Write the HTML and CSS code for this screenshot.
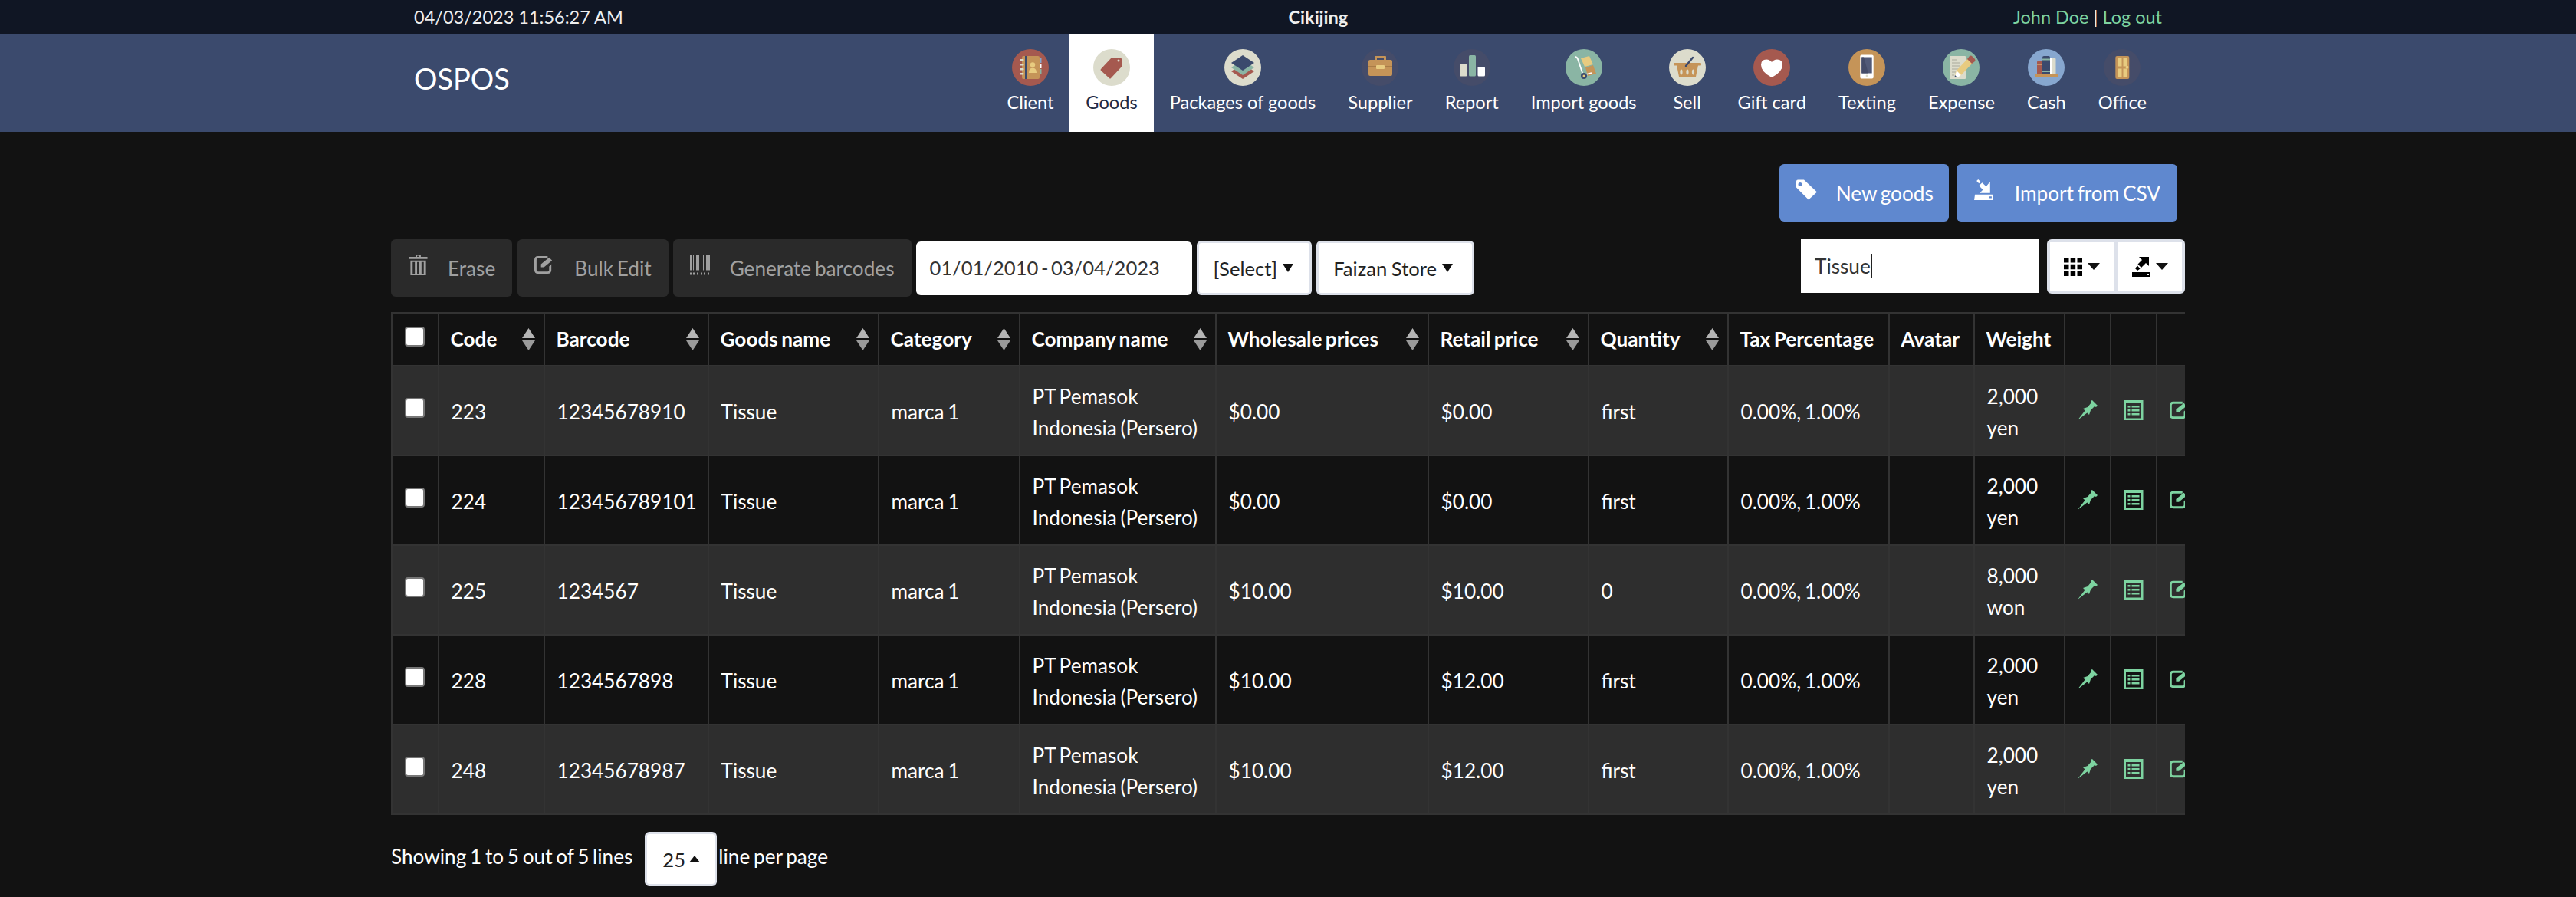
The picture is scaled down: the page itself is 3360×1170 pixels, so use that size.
FILE: index.html
```html
<!DOCTYPE html>
<html lang="en">
<head>
    <meta charset="UTF-8">
    <meta name="viewport" content="width=device-width, initial-scale=1.0">
    <title>OSPOS - Goods</title>
    <link rel="stylesheet" href="styles.css">
</head>
<body>

<svg class="icon-defs" width="0" height="0">
    <symbol id="sort" viewBox="0 0 17 29">
        <polygon points="8.5,0 17,13 0,13" fill="#b5b5b5"/>
        <polygon points="0,16 17,16 8.5,29" fill="#9a9a9a"/>
    </symbol>
    <symbol id="pin" viewBox="0 0 26 26">
        <path d="M0 26 L10 13 L13 16 Z M7 11 L13 9 L18 3 L17 1 L19 0 L26 7 L24 9 L22 8 L17 13 L15 19 Z"/>
    </symbol>
    <symbol id="sheet" viewBox="0 0 25 26">
        <path fill-rule="evenodd" d="M0 0H25V26H0Z M2.5 4V23.5H22.5V4Z M5 7H8V9.5H5Z M10 7H20V9.5H10Z M5 12H8V14.5H5Z M10 12H20V14.5H10Z M5 17H8V19.5H5Z M10 17H20V19.5H10Z"/>
    </symbol>
    <symbol id="edit" viewBox="0 0 28 24">
        <path d="M5 0H18V3H5Q3 3 3 5V19Q3 21 5 21H18Q20 21 20 19V14L23 11V19Q23 24 18 24H5Q0 24 0 19V5Q0 0 5 0Z"/>
        <path d="M9 15V11L20 2L24 6L13 15Z"/>
    </symbol>
    <symbol id="tag" viewBox="0 0 27 26">
        <path fill-rule="evenodd" d="M0 2Q0 0 2 0H10L27 16L16 26L0 10Z M5 3.5A2.5 2.5 0 1 0 5 8.5A2.5 2.5 0 1 0 5 3.5Z"/>
    </symbol>
    <symbol id="export" viewBox="0 0 24 26">
        <path fill-rule="evenodd" d="M1 19H23L24 26H0Z M19 21.5V23.5H22V21.5Z M20 3V17H7L11 13L6 8L10 4L15 9Z M3 2L5 0L8 3L6 5Z"/>
    </symbol>
    <symbol id="export-up" viewBox="0 0 24 26">
        <path fill-rule="evenodd" d="M0 20H24V26H0Z M19 22.5V24H22V22.5Z M9 0H22V12L18 8L12 14L7.5 9.5L13 4Z M4 15L7 11.5L10.5 15.5L7 18Z"/>
    </symbol>
</svg>

<div class="topbar">
    <span>04/03/2023 11:56:27 AM</span>
    <strong class="store-name">Cikijing</strong>
    <span class="user-links"><a href="#">John Doe</a> | <a href="#">Log out</a></span>
</div>

<nav class="navbar">
    <a class="brand" href="#">OSPOS</a>
    <ul class="menu">
        <li class="menu-item">
            <svg class="menu-icon" viewBox="0 0 48 48">
                <circle cx="24" cy="24" r="24" fill="#a5594f"/>
                <rect x="36" y="12" width="2.5" height="6" fill="#87a7cf"/>
                <rect x="36" y="19" width="2.5" height="6" fill="#fff"/>
                <rect x="36" y="26" width="2.5" height="6" fill="#8ab5a4"/>
                <rect x="13" y="9" width="23" height="30" rx="2" fill="#c59458"/>
                <rect x="17" y="9" width="2" height="30" fill="#3b4a6d"/>
                <rect x="10" y="13" width="5.5" height="2.5" rx="1" fill="#dcdccc"/>
                <rect x="10" y="19" width="5.5" height="2.5" rx="1" fill="#dcdccc"/>
                <rect x="10" y="25" width="5.5" height="2.5" rx="1" fill="#dcdccc"/>
                <rect x="10" y="31" width="5.5" height="2.5" rx="1" fill="#dcdccc"/>
                <circle cx="27" cy="20.5" r="3.2" fill="#e8cb80"/>
                <path d="M22 31Q22 24.5 27 24.5Q32 24.5 32 31Z" fill="#e8cb80"/>
            </svg>
            Client
        </li>
        <li class="menu-item active">
            <svg class="menu-icon" viewBox="0 0 48 48">
                <circle cx="24" cy="24" r="24" fill="#dcdccc"/>
                <path d="M24 11H35Q37 11 37 13V23L23 38Q22 39 21 38L10 28Q9 27 10 26Z" fill="#a5594f"/>
                <circle cx="33" cy="15" r="1.5" fill="#dcdccc"/>
            </svg>
            Goods
        </li>
        <li class="menu-item">
            <svg class="menu-icon" viewBox="0 0 48 48">
                <circle cx="24" cy="24" r="24" fill="#dcdccc"/>
                <path d="M24 19L39 29L24 39L9 29Z" fill="#a5594f"/>
                <path d="M24 14L39 24L24 34L9 24Z" fill="#8ab5a4"/>
                <path d="M24 8L39 18L24 28L9 18Z" fill="#3b4a6d"/>
            </svg>
            Packages of goods
        </li>
        <li class="menu-item">
            <svg class="menu-icon" viewBox="0 0 48 48">
                <circle cx="24" cy="24" r="24" fill="#454c69"/>
                <path d="M17 15V10Q17 9 18 9H31Q32 9 32 10V15H29V11.5H20V15Z" fill="#c59458"/>
                <rect x="9" y="14" width="31" height="21" rx="2" fill="#c59458"/>
                <rect x="9" y="22" width="31" height="1" fill="#a97c47"/>
                <rect x="19" y="21" width="11" height="5" rx="1" fill="#e8cb80"/>
            </svg>
            Supplier
        </li>
        <li class="menu-item">
            <svg class="menu-icon" viewBox="0 0 48 48">
                <circle cx="24" cy="24" r="24" fill="#454c69"/>
                <rect x="8" y="19" width="9.5" height="16.5" rx="1.5" fill="#dcdccc"/>
                <rect x="20" y="8" width="9" height="27.5" rx="1.5" fill="#8ab5a4"/>
                <rect x="31.5" y="23" width="9.5" height="12.5" rx="1.5" fill="#fff"/>
            </svg>
            Report
        </li>
        <li class="menu-item">
            <svg class="menu-icon" viewBox="0 0 48 48">
                <circle cx="24" cy="24" r="24" fill="#8ab5a4"/>
                <path d="M20 12L31 9L36 20L25 23Z" fill="#e8cb80"/>
                <path d="M26 24L36 21L40 32L29 35Z" fill="#c59458"/>
                <path d="M12 10Q15 10 16 13L23 34L34 31" fill="none" stroke="#fff" stroke-width="1.8"/>
                <circle cx="24" cy="35" r="4" fill="#3b4a6d"/>
                <circle cx="24" cy="35" r="1.5" fill="#e8cb80"/>
            </svg>
            Import goods
        </li>
        <li class="menu-item">
            <svg class="menu-icon" viewBox="0 0 48 48">
                <circle cx="24" cy="24" r="24" fill="#dcdccc"/>
                <path d="M10 21H38L35 36Q35 37 33 37H15Q13 37 13 36Z" fill="#c59458"/>
                <rect x="6" y="18" width="36" height="3.5" rx="1" fill="#c59458"/>
                <line x1="22" y1="22" x2="31" y2="11" stroke="#3b4a6d" stroke-width="2.5" stroke-linecap="round"/>
                <ellipse cx="16" cy="30" rx="1.6" ry="3.4" fill="#dcdccc"/>
                <ellipse cx="24" cy="30" rx="1.6" ry="3.4" fill="#dcdccc"/>
                <ellipse cx="31.5" cy="30" rx="1.6" ry="3.4" fill="#dcdccc"/>
            </svg>
            Sell
        </li>
        <li class="menu-item">
            <svg class="menu-icon" viewBox="0 0 48 48">
                <circle cx="24" cy="24" r="24" fill="#a5594f"/>
                <path d="M24 37Q10 30 10 20.5Q10 13.5 17 13.5Q21.5 13.5 24 17Q26.5 13.5 31 13.5Q38 13.5 38 20.5Q38 30 24 37Z" fill="#fff"/>
            </svg>
            Gift card
        </li>
        <li class="menu-item">
            <svg class="menu-icon" viewBox="0 0 48 48">
                <circle cx="24" cy="24" r="24" fill="#c59458"/>
                <rect x="15.3" y="7.5" width="17.4" height="31" rx="2" fill="#fff"/>
                <rect x="17.3" y="10.5" width="13.4" height="21" fill="#525a78"/>
                <path d="M17.3 10.5H20L26 31.5H17.3Z" fill="#454c69"/>
                <circle cx="24" cy="35" r="1.4" fill="#dcdccc"/>
            </svg>
            Texting
        </li>
        <li class="menu-item">
            <svg class="menu-icon" viewBox="0 0 48 48">
                <circle cx="24" cy="24" r="24" fill="#8ab5a4"/>
                <rect x="9" y="9" width="21" height="30" rx="1" fill="#dcdccc"/>
                <path d="M12 14H19M12 18H23M12 22H23M12 26H21M12 30H17M12 34H15" stroke="#a9a99b" stroke-width="1.2"/>
                <path d="M17 29L34 11L40 17L23 35L16 35Z" fill="#e8cb80"/>
                <path d="M32 13L35 9Q37 8 38 9L42 13Q43 15 42 16L38 19Z" fill="#a5594f"/>
                <path d="M18 28L24 34L19 37L16 36Z" fill="#fff"/>
                <path d="M16 34L18 36L15.5 37Z" fill="#3b4a6d"/>
            </svg>
            Expense
        </li>
        <li class="menu-item">
            <svg class="menu-icon" viewBox="0 0 48 48">
                <circle cx="24" cy="24" r="24" fill="#87a7cf"/>
                <path d="M12 17Q12 15 14 15H17Q19 15 19 17V33H12Z" fill="#a5594f"/>
                <rect x="12" y="19" width="7" height="1.5" fill="#e8cb80"/>
                <path d="M19 11Q19 9 21 9H27Q29 9 29 11V33H19Z" fill="#3b4a6d"/>
                <rect x="19" y="12.5" width="10" height="2" fill="#8ab5a4"/>
                <rect x="19" y="28" width="10" height="2" fill="#8ab5a4"/>
                <rect x="29" y="12" width="7.5" height="21" rx="1" fill="#dcdccc"/>
                <rect x="29" y="12" width="2" height="21" fill="#fff"/>
                <rect x="9" y="33" width="30" height="3.5" fill="#c59458"/>
            </svg>
            Cash
        </li>
        <li class="menu-item">
            <svg class="menu-icon" viewBox="0 0 48 48">
                <circle cx="24" cy="24" r="24" fill="#454c69"/>
                <rect x="15.3" y="9" width="18" height="30" rx="2" fill="#c59458"/>
                <rect x="18" y="12" width="5.5" height="10.5" fill="#e8cb80"/>
                <rect x="25.5" y="12" width="5.5" height="10.5" fill="#e8cb80"/>
                <rect x="18" y="25.5" width="5.5" height="10.5" fill="#e8cb80"/>
                <rect x="25.5" y="25.5" width="5.5" height="10.5" fill="#e8cb80"/>
                <circle cx="30.5" cy="23.7" r="2" fill="#e8cb80"/>
            </svg>
            Office
        </li>
    </ul>
</nav>

<main class="content">
    <div class="actions">
        <button class="btn btn-primary btn-new"><svg class="btn-icon"><use href="#tag"/></svg>New goods</button>
        <button class="btn btn-primary btn-csv"><svg class="btn-icon"><use href="#export"/></svg>Import from CSV</button>
    </div>

    <div class="toolbar">
        <button class="btn btn-muted btn-erase">
            <svg class="btn-icon" viewBox="0 0 27 28">
                <path fill-rule="evenodd" d="M10 0H17V3H26V6H1V3H10Z M12 1.5V3H15V1.5Z M3 8H24V28H3Z M6 10V26H9V10Z M12 10V26H15V10Z M18 10V26H21V10Z"/>
            </svg>Erase
        </button>
        <button class="btn btn-muted">
            <svg class="btn-icon"><use href="#edit"/></svg>Bulk Edit
        </button>
        <button class="btn btn-muted">
            <svg class="btn-icon" viewBox="0 0 27 26">
                <path d="M0 0H2V20H0Z M4 0H5V20H4Z M8 0H12V20H8Z M14 0H15V20H14Z M17 0H18V20H17Z M21 0H26V20H21Z M0 23H2V26H0Z M4 23H6V26H4Z M9 23H11V26H9Z M14 23H16V26H14Z M18 23H20V26H18Z M23 23H25V26H23Z"/>
            </svg>Generate barcodes
        </button>
        <div class="date-range">01/01/2010 - 03/04/2023</div>
        <button class="btn btn-select">[Select]<span class="caret"></span></button>
        <button class="btn btn-select btn-store">Faizan Store<span class="caret"></span></button>

        <div class="search-box">Tissue<span class="text-cursor"></span></div>
        <div class="btn-group">
            <button class="group-btn">
                <svg class="grid-icon" viewBox="0 0 24 24">
                    <path d="M0 0H6.5V6.5H0Z M8.7 0H15.2V6.5H8.7Z M17.5 0H24V6.5H17.5Z M0 8.7H6.5V15.2H0Z M8.7 8.7H15.2V15.2H8.7Z M17.5 8.7H24V15.2H17.5Z M0 17.5H6.5V24H0Z M8.7 17.5H15.2V24H8.7Z M17.5 17.5H24V24H17.5Z"/>
                </svg><span class="caret caret-wide"></span>
            </button>
            <button class="group-btn">
                <svg class="export-icon"><use href="#export-up"/></svg><span class="caret caret-wide"></span>
            </button>
        </div>
    </div>

    <div class="table-wrap">
        <table class="goods-table">
            <colgroup>
                <col class="c-check"><col class="c-code"><col class="c-barcode"><col class="c-name"><col class="c-category">
                <col class="c-company"><col class="c-wholesale"><col class="c-retail"><col class="c-qty"><col class="c-tax">
                <col class="c-avatar"><col class="c-weight"><col class="c-act"><col class="c-act"><col class="c-act">
            </colgroup>
            <thead>
                <tr>
                    <th><input class="check" type="checkbox"></th>
                    <th><div class="th-sort">Code<svg class="sort-icon"><use href="#sort"/></svg></div></th>
                    <th><div class="th-sort">Barcode<svg class="sort-icon"><use href="#sort"/></svg></div></th>
                    <th><div class="th-sort">Goods name<svg class="sort-icon"><use href="#sort"/></svg></div></th>
                    <th><div class="th-sort">Category<svg class="sort-icon"><use href="#sort"/></svg></div></th>
                    <th><div class="th-sort">Company name<svg class="sort-icon"><use href="#sort"/></svg></div></th>
                    <th><div class="th-sort">Wholesale prices<svg class="sort-icon"><use href="#sort"/></svg></div></th>
                    <th><div class="th-sort">Retail price<svg class="sort-icon"><use href="#sort"/></svg></div></th>
                    <th><div class="th-sort">Quantity<svg class="sort-icon"><use href="#sort"/></svg></div></th>
                    <th>Tax Percentage</th>
                    <th>Avatar</th>
                    <th>Weight</th>
                    <th></th>
                    <th></th>
                    <th></th>
                </tr>
            </thead>
            <tbody>
                <tr>
                    <td><input class="check" type="checkbox"></td>
                    <td>223</td>
                    <td>12345678910</td>
                    <td>Tissue</td>
                    <td>marca 1</td>
                    <td>PT Pemasok Indonesia (Persero)</td>
                    <td>$0.00</td>
                    <td>$0.00</td>
                    <td>first</td>
                    <td>0.00%, 1.00%</td>
                    <td></td>
                    <td>2,000 yen</td>
                    <td><svg class="act-icon"><use href="#pin"/></svg></td>
                    <td><svg class="act-icon"><use href="#sheet"/></svg></td>
                    <td><svg class="act-icon"><use href="#edit"/></svg></td>
                </tr>
                <tr>
                    <td><input class="check" type="checkbox"></td>
                    <td>224</td>
                    <td>123456789101</td>
                    <td>Tissue</td>
                    <td>marca 1</td>
                    <td>PT Pemasok Indonesia (Persero)</td>
                    <td>$0.00</td>
                    <td>$0.00</td>
                    <td>first</td>
                    <td>0.00%, 1.00%</td>
                    <td></td>
                    <td>2,000 yen</td>
                    <td><svg class="act-icon"><use href="#pin"/></svg></td>
                    <td><svg class="act-icon"><use href="#sheet"/></svg></td>
                    <td><svg class="act-icon"><use href="#edit"/></svg></td>
                </tr>
                <tr>
                    <td><input class="check" type="checkbox"></td>
                    <td>225</td>
                    <td>1234567</td>
                    <td>Tissue</td>
                    <td>marca 1</td>
                    <td>PT Pemasok Indonesia (Persero)</td>
                    <td>$10.00</td>
                    <td>$10.00</td>
                    <td>0</td>
                    <td>0.00%, 1.00%</td>
                    <td></td>
                    <td>8,000 won</td>
                    <td><svg class="act-icon"><use href="#pin"/></svg></td>
                    <td><svg class="act-icon"><use href="#sheet"/></svg></td>
                    <td><svg class="act-icon"><use href="#edit"/></svg></td>
                </tr>
                <tr>
                    <td><input class="check" type="checkbox"></td>
                    <td>228</td>
                    <td>1234567898</td>
                    <td>Tissue</td>
                    <td>marca 1</td>
                    <td>PT Pemasok Indonesia (Persero)</td>
                    <td>$10.00</td>
                    <td>$12.00</td>
                    <td>first</td>
                    <td>0.00%, 1.00%</td>
                    <td></td>
                    <td>2,000 yen</td>
                    <td><svg class="act-icon"><use href="#pin"/></svg></td>
                    <td><svg class="act-icon"><use href="#sheet"/></svg></td>
                    <td><svg class="act-icon"><use href="#edit"/></svg></td>
                </tr>
                <tr>
                    <td><input class="check" type="checkbox"></td>
                    <td>248</td>
                    <td>12345678987</td>
                    <td>Tissue</td>
                    <td>marca 1</td>
                    <td>PT Pemasok Indonesia (Persero)</td>
                    <td>$10.00</td>
                    <td>$12.00</td>
                    <td>first</td>
                    <td>0.00%, 1.00%</td>
                    <td></td>
                    <td>2,000 yen</td>
                    <td><svg class="act-icon"><use href="#pin"/></svg></td>
                    <td><svg class="act-icon"><use href="#sheet"/></svg></td>
                    <td><svg class="act-icon"><use href="#edit"/></svg></td>
                </tr>
            </tbody>
        </table>
    </div>

    <div class="pager">
        <span class="pager-text">Showing 1 to 5 out of 5 lines</span>
        <button class="btn btn-select btn-size">25<span class="caret caret-up"></span></button>
        <span class="pager-text">line per page</span>
    </div>
</main>

</body>
</html>
```

FILE: styles.css
```css
* {
    box-sizing: border-box;
}
body {
    margin: 0;
    background-color: #121212;
    color: #fff;
    font-family: Lato, "Open Sans", sans-serif;
    font-size: 26.2px;
    line-height: 41px;
    word-spacing: -2px;
}
a {
    color: inherit;
    text-decoration: none;
}
.icon-defs {
    position: absolute;
}
.topbar {
    display: flex;
    justify-content: space-between;
    align-items: center;
    height: 44px;
    padding: 0 540px;
    background: #101624;
    color: #eee;
    font-size: 23.5px;
    word-spacing: 0;
}
.user-links a {
    color: #7dd3a0;
}
.navbar {
    display: flex;
    justify-content: space-between;
    height: 128px;
    padding: 0 539px 0 540px;
    background: #3b4a6d;
}
.brand {
    font-size: 38px;
    line-height: 116px;
    word-spacing: 0;
}
.menu {
    display: flex;
    margin: 0;
    padding: 0;
    list-style: none;
}
.menu-item {
    display: flex;
    flex-direction: column;
    align-items: center;
    padding: 20px 21px 0;
    font-size: 23.6px;
    line-height: 40px;
    word-spacing: 0;
}
.menu-item.active {
    background: #fff;
    color: #1f2a44;
}
.menu-icon {
    width: 48px;
    height: 48px;
    margin-bottom: 1px;
}
.content {
    padding: 42px 510px 0;
}
.actions {
    display: flex;
    justify-content: flex-end;
    gap: 10px;
    padding-right: 10px;
}
.btn {
    display: inline-flex;
    align-items: center;
    height: 75px;
    padding: 0 22px;
    border: none;
    border-radius: 6px;
    font-family: inherit;
    font-size: 26.2px;
    word-spacing: -2px;
    white-space: nowrap;
}
.btn-primary {
    background: #5f88cf;
    color: #fff;
}
.btn-new {
    padding-right: 20px;
}
.btn-muted {
    background: #2a2a2a;
    color: #a0a0a0;
}
.btn-erase {
    margin-right: 1px;
}
.btn-icon {
    width: 27px;
    height: 27px;
    margin: -8px 25px 0 0;
    fill: #fff;
}
.btn-csv .btn-icon {
    margin-right: 27px;
}
.btn-muted .btn-icon {
    fill: #a0a0a0;
}
.toolbar {
    display: flex;
    align-items: center;
    gap: 6px;
    margin-top: 23px;
}
.date-range {
    width: 360px;
    height: 70px;
    padding-left: 18px;
    border-radius: 6px;
    background: #fff;
    color: #333;
    font-size: 25.6px;
    line-height: 68px;
    word-spacing: -3px;
}
.btn-select {
    height: 71px;
    padding: 0 21px 0 19px;
    border: 3px solid #dde1ea;
    background: #fff;
    color: #222;
    font-size: 25.6px;
    word-spacing: -1px;
}
.btn-store {
    padding-right: 25px;
}
.caret {
    width: 0;
    height: 0;
    margin-left: 7px;
    border-top: 11px solid #111;
    border-left: 7.5px solid transparent;
    border-right: 7.5px solid transparent;
}
.caret-wide {
    margin-left: 7px;
    border-top-width: 9px;
    border-left-width: 8px;
    border-right-width: 8px;
}
.caret-up {
    border-top: none;
    border-bottom: 9px solid #111;
}
.search-box {
    display: flex;
    align-items: center;
    align-self: flex-start;
    width: 311px;
    height: 70px;
    margin-left: auto;
    padding-left: 18px;
    background: #fff;
    color: #333;
}
.text-cursor {
    width: 2px;
    height: 32px;
    background: #222;
}
.btn-group {
    display: flex;
    align-self: flex-start;
    gap: 6px;
    width: 180px;
    height: 71px;
    margin-left: 4px;
    border: 4px solid #dde1ea;
    border-radius: 6px;
    background: #dde1ea;
}
.group-btn {
    display: flex;
    flex: 1;
    align-items: center;
    justify-content: center;
    padding: 0;
    border: none;
    background: #fff;
}
.grid-icon,
.export-icon {
    width: 24px;
    height: 26px;
    fill: #000;
}
.table-wrap {
    margin-top: 20px;
    overflow: hidden;
}
.goods-table {
    width: 2362px;
    border-collapse: collapse;
    table-layout: fixed;
}
.c-check { width: 61px; }
.c-code { width: 138px; }
.c-barcode { width: 214px; }
.c-name { width: 222px; }
.c-category { width: 184px; }
.c-company { width: 256px; }
.c-wholesale { width: 277px; }
.c-retail { width: 209px; }
.c-qty { width: 182px; }
.c-tax { width: 210px; }
.c-avatar { width: 111px; }
.c-weight { width: 118px; }
.c-act { width: 60px; }
.goods-table th,
.goods-table td {
    padding: 0 15.5px;
    border: 2px solid #333;
    text-align: left;
    vertical-align: middle;
}
.goods-table th {
    height: 69px;
    padding-left: 14.5px;
    font-weight: 700;
    white-space: nowrap;
}
.goods-table td {
    height: 117px;
    padding-top: 4px;
}
.goods-table tbody tr:nth-child(odd) {
    background: #2e2e2e;
}
.th-sort {
    display: flex;
    justify-content: space-between;
    align-items: center;
    margin-right: -4.5px;
}
.sort-icon {
    width: 17px;
    height: 29px;
}
.check {
    display: block;
    width: 26px;
    height: 26px;
    margin: -12px 0 0 0;
    border: 2px solid #777;
    border-radius: 4px;
    background: #fff;
    appearance: none;
}
.goods-table th .check {
    margin: -7px 0 0 1px;
}
.act-icon {
    display: block;
    width: 26px;
    height: 26px;
    margin-top: -5px;
    fill: #7dd3a0;
}
.pager {
    display: flex;
    align-items: center;
    margin-top: 22px;
}
.pager-text {
    padding-bottom: 7px;
}
.btn-size {
    width: 94px;
    margin: 0 2px 0 16px;
    padding: 0 0 0 20px;
}
.btn-size .caret {
    margin-left: 5px;
}
```
